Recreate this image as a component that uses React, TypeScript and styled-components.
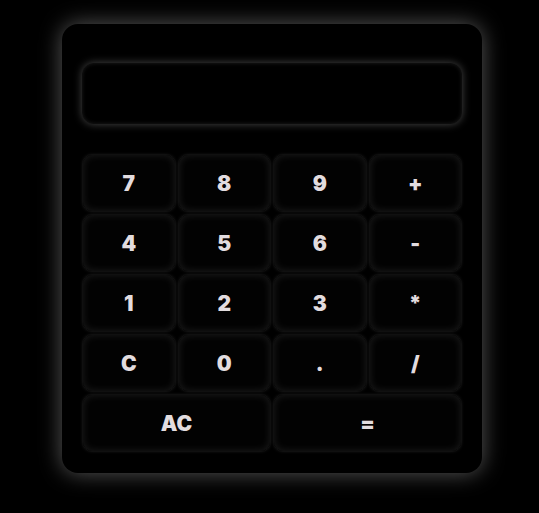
import styled, { createGlobalStyle } from 'styled-components';

const GlobalStyle = createGlobalStyle`
  html, body {
    margin: 0;
    background: #000;
  }
  body {
    font-family: Inter, "Liberation Sans", sans-serif;
  }
`;

const Page = styled.div`
  min-height: 513px;
  padding: 24px 0 0 62px;
  box-sizing: border-box;
`;

const Calculator = styled.div`
  width: 420px;
  height: 449px;
  box-sizing: border-box;
  padding: 39px 20px 20px;
  background: #000;
  border-radius: 16px;
  box-shadow: 0 0 22px rgba(255, 255, 255, 0.35);
`;

const Display = styled.div`
  height: 61px;
  border-radius: 12px;
  background: #000;
  box-shadow: 0 0 8px rgba(255, 255, 255, 0.28), inset 0 0 4px rgba(255, 255, 255, 0.12);
  margin-bottom: 30px;
`;

const Keys = styled.div`
  display: grid;
  grid-template-columns: repeat(4, 1fr);
  grid-auto-rows: 58px;
  gap: 2px;
`;

const Key = styled.button<{ $wide?: boolean }>`
  grid-column: span ${(p) => (p.$wide ? 2 : 1)};
  background: #020202;
  border: 1px solid #101010;
  border-radius: 10px;
  box-shadow: inset 0 0 8px rgba(255, 255, 255, 0.11), 0 0 3px rgba(255, 255, 255, 0.08);
  color: #e2dcdf;
  font-family: Inter, "Liberation Sans", sans-serif;
  font-weight: 900;
  font-size: 21px;
  cursor: pointer;
  padding: 0;
`;

const keys: { label: string; wide?: boolean }[] = [
  { label: '7' }, { label: '8' }, { label: '9' }, { label: '+' },
  { label: '4' }, { label: '5' }, { label: '6' }, { label: '-' },
  { label: '1' }, { label: '2' }, { label: '3' }, { label: '*' },
  { label: 'C' }, { label: '0' }, { label: '.' }, { label: '/' },
  { label: 'AC', wide: true }, { label: '=', wide: true },
];

export default function App() {
  return (
    <Page>
      <GlobalStyle />
      <Calculator>
        <Display />
        <Keys>
          {keys.map((k) => (
            <Key key={k.label} $wide={k.wide}>
              {k.label}
            </Key>
          ))}
        </Keys>
      </Calculator>
    </Page>
  );
}
